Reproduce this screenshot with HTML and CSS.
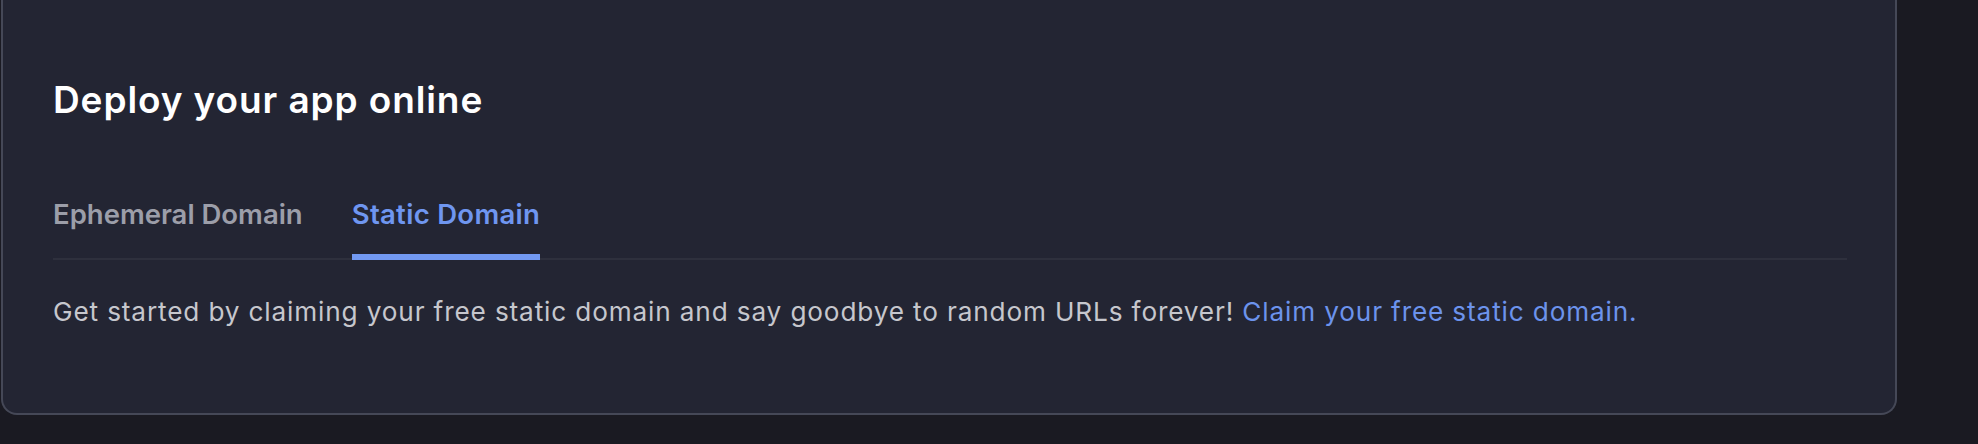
FILE: index.html
```html
<!DOCTYPE html>
<html lang="en">
<head>
<meta charset="utf-8">
<title>Deploy your app online</title>
<link rel="stylesheet" href="styles.css">
</head>
<body>
  <section class="card">
    <h2 class="title">Deploy your app online</h2>
    <div class="tabs">
      <div class="tab">Ephemeral Domain</div>
      <div class="tab active">Static Domain</div>
    </div>
    <p class="text">Get started by claiming your free static domain and say goodbye to random URLs forever! <a class="link" href="#">Claim your free static domain.</a></p>
  </section>
</body>
</html>
```

FILE: styles.css
```css
html, body {
  margin: 0;
  padding: 0;
  background: #1a1a22;
  height: 444px;
  overflow: hidden;
}
body {
  font-family: Inter, "Noto Sans", sans-serif;
}
.card {
  margin-left: 1px;
  width: 1896px;
  box-sizing: border-box;
  background: #232533;
  border: 2px solid #454857;
  border-top: none;
  border-radius: 0 0 16px 16px;
  padding: 78px 48px 85px 50px;
}
.title {
  margin: 0;
  font-size: 37px;
  line-height: 44px;
  font-weight: 600;
  letter-spacing: 0.9px;
  color: #ffffff;
}
.tabs {
  margin-top: 75px;
  display: flex;
  gap: 49px;
  border-bottom: 2px solid #2e303d;
}
.tab {
  font-size: 27.5px;
  line-height: 34px;
  font-weight: 600;
  color: #9c9ea9;
  padding-bottom: 23px;
  border-bottom: 6px solid transparent;
  margin-bottom: -2px;
}
.tab.active {
  color: #6f96f0;
  border-bottom-color: #7299f2;
  letter-spacing: 0.3px;
}
.text {
  margin: 36px 0 0;
  font-size: 26.2px;
  line-height: 32px;
  font-weight: 400;
  letter-spacing: 0.85px;
  color: #c6c7cd;
}
.link {
  color: #6c93ec;
  text-decoration: none;
}
```
